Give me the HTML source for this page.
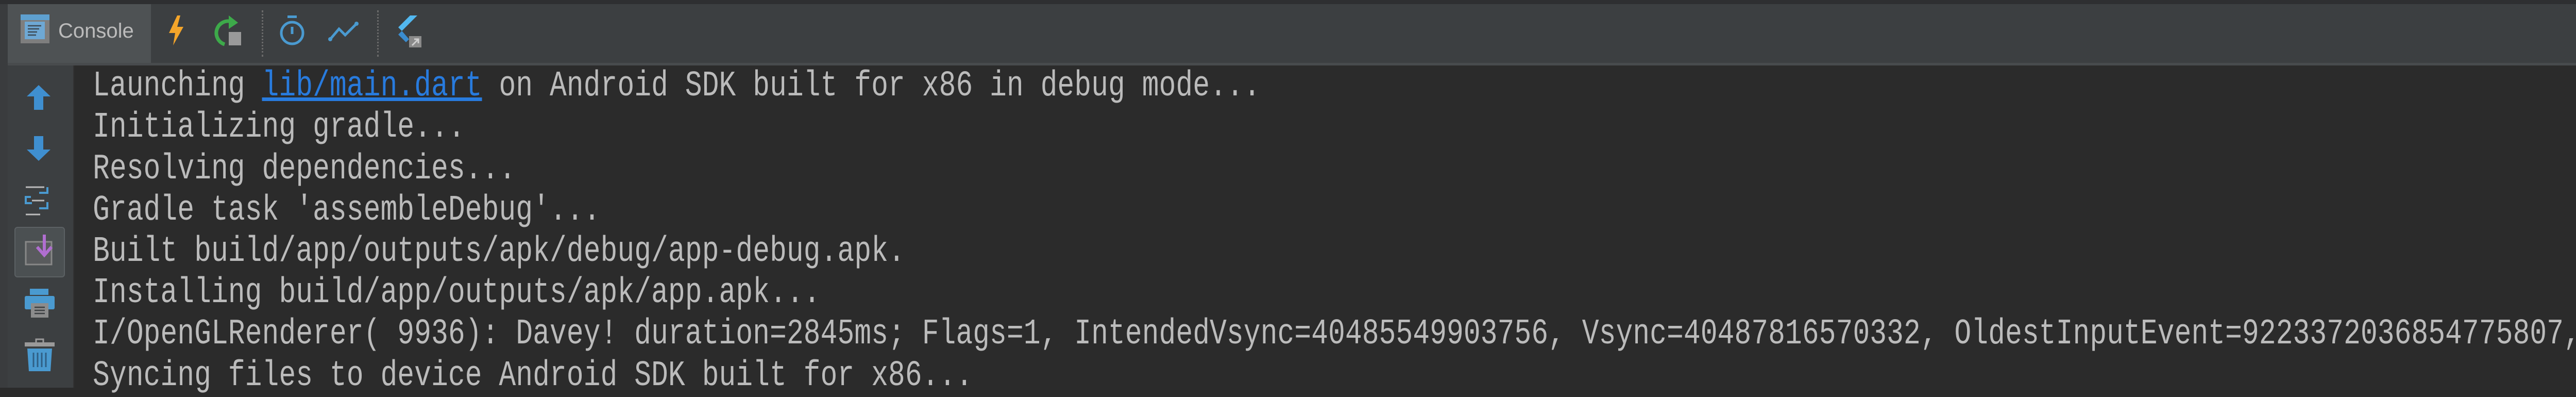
<!DOCTYPE html>
<html><head><meta charset="utf-8"><style>
*{margin:0;padding:0;box-sizing:border-box}
body{width:5476px;height:752px;background:#2b2b2b;position:relative;overflow:hidden;font-family:"Liberation Mono",monospace}
.a{position:absolute}
.ln{position:absolute;left:180px;font-size:70px;line-height:80.2px;color:#bbbbbb;white-space:pre;transform:scaleX(0.782);transform-origin:0 0}
</style></head><body>
<div class="a" style="left:0;top:0;width:5476px;height:8px;background:#2e2f31"></div>
<div class="a" style="left:0;top:8px;width:15px;height:744px;background:#3a3c3e"></div>
<div class="a" style="left:15px;top:8px;width:5461px;height:114px;background:#3c3f41"></div>
<div class="a" style="left:15px;top:8px;width:278px;height:114px;background:#4e5254"></div>
<div class="a" style="left:15px;top:122px;width:5461px;height:5px;background:#484b4d"></div>
<div class="a" style="left:15px;top:127px;width:127px;height:625px;background:#3c3f41"></div>
<div class="a" style="left:142px;top:127px;width:2px;height:625px;background:#323232"></div>
<svg class="a" style="left:40px;top:28px" width="56" height="56" viewBox="0 0 56 56">
<rect x="0" y="0" width="56" height="56" fill="#7e7e7e"/><rect x="0" y="0" width="56" height="11" fill="#5ea0d0"/>
<rect x="8" y="14" width="39" height="34" fill="#6ea8d4"/>
<g stroke="#3c4a55" stroke-width="2.5"><line x1="14" y1="22" x2="40" y2="22"/><line x1="14" y1="28" x2="36" y2="28"/><line x1="14" y1="34" x2="32" y2="34"/><line x1="14" y1="40" x2="30" y2="40"/></g>
</svg>
<div class="a" style="left:113px;top:38px;font-family:'Liberation Sans',sans-serif;font-size:40px;color:#bbbbbb">Console</div>
<svg class="a" style="left:322px;top:28px" width="40" height="62" viewBox="0 0 40 62"><path d="M22 2 L6 36 H18 L14 60 L34 24 H22 L28 2Z" fill="#f4a52a"/></svg>
<svg class="a" style="left:412px;top:28px" width="62" height="62" viewBox="0 0 62 62"><path d="M38 14 A22 22 0 1 0 24 58" fill="none" stroke="#3daa4a" stroke-width="7"/><path d="M32 2 L50 16 L32 28Z" fill="#3daa4a"/><rect x="32" y="34" width="24" height="26" fill="#9a9a9a"/></svg>
<div class="a" style="left:508px;top:20px;height:90px;border-left:3px dotted #6a6a6a"></div>
<svg class="a" style="left:540px;top:28px" width="54" height="62" viewBox="0 0 54 62"><rect x="18" y="2" width="18" height="5" fill="#4a9ad0"/><circle cx="27" cy="36" r="21" fill="none" stroke="#4a9ad0" stroke-width="5"/><line x1="27" y1="24" x2="27" y2="38" stroke="#4a9ad0" stroke-width="5"/></svg>
<svg class="a" style="left:636px;top:40px" width="62" height="42" viewBox="0 0 62 42"><polyline points="5,36 22,16 34,28 56,6" fill="none" stroke="#4a9ad0" stroke-width="5"/><circle cx="5" cy="36" r="4" fill="#4a9ad0"/><circle cx="56" cy="6" r="4" fill="#4a9ad0"/></svg>
<div class="a" style="left:732px;top:20px;height:90px;border-left:3px dotted #6a6a6a"></div>
<svg class="a" style="left:766px;top:30px" width="62" height="62" viewBox="0 0 62 62"><path d="M30 0 H44 L14 30 L7 23Z" fill="#52b8f0"/><path d="M14 30 L7 37 L22 52 L28 46Z" fill="#3a8cd0"/><rect x="28" y="40" width="24" height="24" fill="#8a8a8a"/><path d="M34 58 L46 46 M38 46 H46 V54" stroke="#cfcfcf" stroke-width="3" fill="none"/></svg>
<svg class="a" style="left:52px;top:165px" width="46" height="48" viewBox="0 0 46 48"><path d="M23 0 L46 22 H32 V48 H14 V22 H0Z" fill="#3f8fd0"/></svg>
<svg class="a" style="left:52px;top:264px" width="46" height="48" viewBox="0 0 46 48"><path d="M23 48 L46 26 H32 V0 H14 V26 H0Z" fill="#3f8fd0"/></svg>
<svg class="a" style="left:48px;top:360px" width="56" height="60" viewBox="0 0 56 60"><g stroke="#bbbbbb" stroke-width="3"><line x1="2" y1="3" x2="38" y2="3"/><line x1="2" y1="56" x2="30" y2="56"/><line x1="14" y1="29" x2="38" y2="29"/></g><g fill="none" stroke="#4a9ad0" stroke-width="4"><path d="M44 3 V14 H28"/><path d="M12 22 H2 V34 H14"/><path d="M44 32 V44 H28"/></g></svg>
<div class="a" style="left:28px;top:440px;width:98px;height:98px;background:#4b5052;border:2px solid #5c6164;border-radius:6px"></div>
<svg class="a" style="left:48px;top:455px" width="58" height="70" viewBox="0 0 58 70"><rect x="2" y="14" width="50" height="44" fill="#595b5d" stroke="#888" stroke-width="3"/><path d="M38 0 V36 M24 24 L38 40 L52 24" fill="none" stroke="#b06ed0" stroke-width="6"/></svg>
<svg class="a" style="left:48px;top:560px" width="58" height="58" viewBox="0 0 58 58"><rect x="10" y="0" width="36" height="12" fill="#4a9ad0"/><rect x="0" y="14" width="58" height="26" rx="3" fill="#4a9ad0"/><rect x="12" y="28" width="34" height="28" fill="#8c8c8c"/><g stroke="#3c3f41" stroke-width="2.5"><line x1="19" y1="36" x2="39" y2="36"/><line x1="19" y1="42" x2="39" y2="42"/><line x1="19" y1="48" x2="39" y2="48"/></g></svg>
<svg class="a" style="left:48px;top:656px" width="58" height="64" viewBox="0 0 58 64"><path d="M22 8 V2 H36 V8" fill="none" stroke="#9a9a9a" stroke-width="3"/><rect x="0" y="8" width="58" height="8" fill="#9a9a9a"/><path d="M5 20 H53 L50 64 H8Z" fill="#4a9ad0"/><g stroke="#2f5f85" stroke-width="3"><line x1="17" y1="28" x2="17" y2="56"/><line x1="25" y1="28" x2="25" y2="56"/><line x1="33" y1="28" x2="33" y2="56"/><line x1="41" y1="28" x2="41" y2="56"/></g></svg>
<div class="ln" style="top:128.2px">Launching <span style="color:#287bde;text-decoration:underline">lib/main.dart</span> on Android SDK built for x86 in debug mode...</div>
<div class="ln" style="top:208.4px">Initializing gradle...</div>
<div class="ln" style="top:288.6px">Resolving dependencies...</div>
<div class="ln" style="top:368.8px">Gradle task 'assembleDebug'...</div>
<div class="ln" style="top:449px">Built build/app/outputs/apk/debug/app-debug.apk.</div>
<div class="ln" style="top:529.2px">Installing build/app/outputs/apk/app.apk...</div>
<div class="ln" style="top:609.4px">I/OpenGLRenderer( 9936): Davey! duration=2845ms; Flags=1, IntendedVsync=40485549903756, Vsync=40487816570332, OldestInputEvent=9223372036854775807,</div>
<div class="ln" style="top:689.6px">Syncing files to device Android SDK built for x86...</div>
</body></html>
